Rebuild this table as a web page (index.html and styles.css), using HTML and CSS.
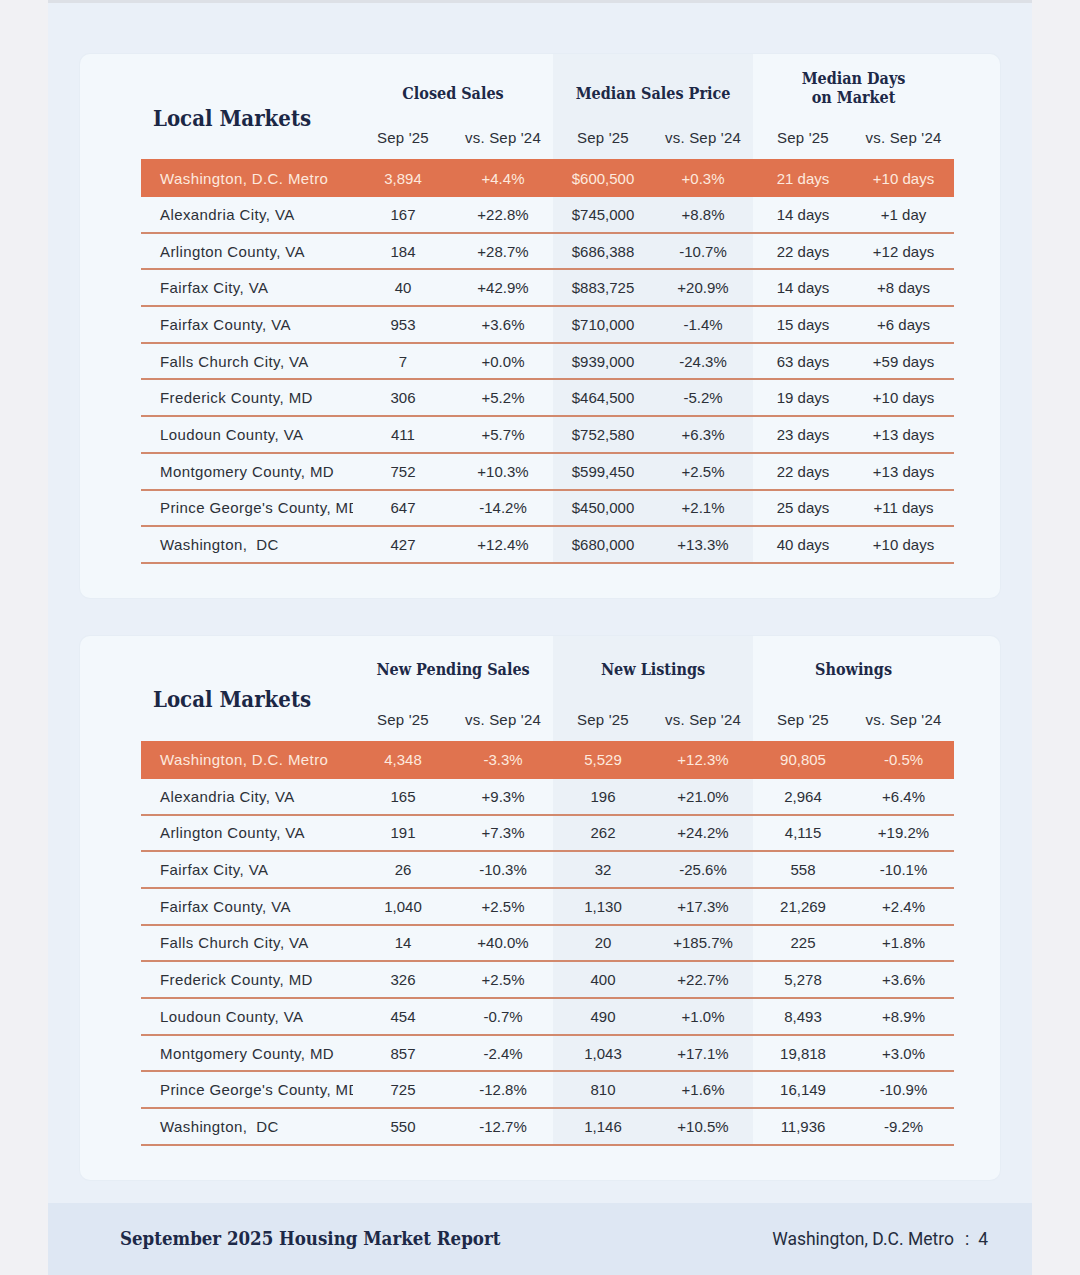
FILE: index.html
```html
<!DOCTYPE html>
<html lang="en">
<head>
<meta charset="utf-8">
<title>September 2025 Housing Market Report</title>
<link rel="stylesheet" href="styles.css">
</head>
<body>
<div class="page">
  <section class="card">
    <table class="mkt">
      <colgroup>
        <col class="c-name"><col class="c-num"><col class="c-num"><col class="c-num shade"><col class="c-num shade"><col class="c-num"><col class="c-last">
      </colgroup>
      <thead>
        <tr class="grp">
          <th class="title" rowspan="2">Local Markets</th>
          <th colspan="2" class="lower">Closed Sales</th>
          <th colspan="2" class="lower">Median Sales Price</th>
          <th colspan="2">Median Days<br>on Market</th>
        </tr>
        <tr class="sub">
          <th>Sep '25</th><th>vs. Sep '24</th><th>Sep '25</th><th>vs. Sep '24</th><th>Sep '25</th><th>vs. Sep '24</th>
        </tr>
      </thead>
      <tbody>
        <tr class="hl"><td class="name">Washington, D.C. Metro</td><td>3,894</td><td>+4.4%</td><td>$600,500</td><td>+0.3%</td><td>21 days</td><td>+10 days</td></tr>
        <tr><td class="name">Alexandria City, VA</td><td>167</td><td>+22.8%</td><td>$745,000</td><td>+8.8%</td><td>14 days</td><td>+1 day</td></tr>
        <tr><td class="name">Arlington County, VA</td><td>184</td><td>+28.7%</td><td>$686,388</td><td>-10.7%</td><td>22 days</td><td>+12 days</td></tr>
        <tr><td class="name">Fairfax City, VA</td><td>40</td><td>+42.9%</td><td>$883,725</td><td>+20.9%</td><td>14 days</td><td>+8 days</td></tr>
        <tr><td class="name">Fairfax County, VA</td><td>953</td><td>+3.6%</td><td>$710,000</td><td>-1.4%</td><td>15 days</td><td>+6 days</td></tr>
        <tr><td class="name">Falls Church City, VA</td><td>7</td><td>+0.0%</td><td>$939,000</td><td>-24.3%</td><td>63 days</td><td>+59 days</td></tr>
        <tr><td class="name">Frederick County, MD</td><td>306</td><td>+5.2%</td><td>$464,500</td><td>-5.2%</td><td>19 days</td><td>+10 days</td></tr>
        <tr><td class="name">Loudoun County, VA</td><td>411</td><td>+5.7%</td><td>$752,580</td><td>+6.3%</td><td>23 days</td><td>+13 days</td></tr>
        <tr><td class="name">Montgomery County, MD</td><td>752</td><td>+10.3%</td><td>$599,450</td><td>+2.5%</td><td>22 days</td><td>+13 days</td></tr>
        <tr><td class="name">Prince George's County, MD</td><td>647</td><td>-14.2%</td><td>$450,000</td><td>+2.1%</td><td>25 days</td><td>+11 days</td></tr>
        <tr><td class="name">Washington,&nbsp; DC</td><td>427</td><td>+12.4%</td><td>$680,000</td><td>+13.3%</td><td>40 days</td><td>+10 days</td></tr>
      </tbody>
    </table>
  </section>

  <section class="card">
    <table class="mkt">
      <colgroup>
        <col class="c-name"><col class="c-num"><col class="c-num"><col class="c-num shade"><col class="c-num shade"><col class="c-num"><col class="c-last">
      </colgroup>
      <thead>
        <tr class="grp">
          <th class="title" rowspan="2">Local Markets</th>
          <th colspan="2">New Pending Sales</th>
          <th colspan="2">New Listings</th>
          <th colspan="2">Showings</th>
        </tr>
        <tr class="sub">
          <th>Sep '25</th><th>vs. Sep '24</th><th>Sep '25</th><th>vs. Sep '24</th><th>Sep '25</th><th>vs. Sep '24</th>
        </tr>
      </thead>
      <tbody>
        <tr class="hl"><td class="name">Washington, D.C. Metro</td><td>4,348</td><td>-3.3%</td><td>5,529</td><td>+12.3%</td><td>90,805</td><td>-0.5%</td></tr>
        <tr><td class="name">Alexandria City, VA</td><td>165</td><td>+9.3%</td><td>196</td><td>+21.0%</td><td>2,964</td><td>+6.4%</td></tr>
        <tr><td class="name">Arlington County, VA</td><td>191</td><td>+7.3%</td><td>262</td><td>+24.2%</td><td>4,115</td><td>+19.2%</td></tr>
        <tr><td class="name">Fairfax City, VA</td><td>26</td><td>-10.3%</td><td>32</td><td>-25.6%</td><td>558</td><td>-10.1%</td></tr>
        <tr><td class="name">Fairfax County, VA</td><td>1,040</td><td>+2.5%</td><td>1,130</td><td>+17.3%</td><td>21,269</td><td>+2.4%</td></tr>
        <tr><td class="name">Falls Church City, VA</td><td>14</td><td>+40.0%</td><td>20</td><td>+185.7%</td><td>225</td><td>+1.8%</td></tr>
        <tr><td class="name">Frederick County, MD</td><td>326</td><td>+2.5%</td><td>400</td><td>+22.7%</td><td>5,278</td><td>+3.6%</td></tr>
        <tr><td class="name">Loudoun County, VA</td><td>454</td><td>-0.7%</td><td>490</td><td>+1.0%</td><td>8,493</td><td>+8.9%</td></tr>
        <tr><td class="name">Montgomery County, MD</td><td>857</td><td>-2.4%</td><td>1,043</td><td>+17.1%</td><td>19,818</td><td>+3.0%</td></tr>
        <tr><td class="name">Prince George's County, MD</td><td>725</td><td>-12.8%</td><td>810</td><td>+1.6%</td><td>16,149</td><td>-10.9%</td></tr>
        <tr><td class="name">Washington,&nbsp; DC</td><td>550</td><td>-12.7%</td><td>1,146</td><td>+10.5%</td><td>11,936</td><td>-9.2%</td></tr>
      </tbody>
    </table>
  </section>

  <footer class="foot">
    <div class="foot-title">September 2025 Housing Market Report</div>
    <div class="foot-page">Washington, D.C. Metro<span class="sep">:</span>4</div>
  </footer>
</div>
</body>
</html>
```

FILE: styles.css
```css
* { box-sizing: border-box; }

html, body {
  margin: 0;
  padding: 0;
  background: #f1f1f4;
}

body {
  font-family: "Liberation Sans", Arial, sans-serif;
  color: #2c3038;
}

.page {
  width: 984px;
  margin: 0 auto;
  background: #eaf0f8;
  border-top: 3px solid #dde0e6;
  padding-top: 51px;
  display: flex;
  flex-direction: column;
  gap: 38px;
}

.card {
  margin: 0 32px;
  background: #f3f8fc;
  border-radius: 10px;
  box-shadow: 0 0 0 1px #e6edf5;
  padding: 0 46px 34px 61px;
}

.mkt {
  width: 813px;
  table-layout: fixed;
  border-collapse: separate;
  border-spacing: 0;
}

.c-name { width: 212px; }
.c-num { width: 100px; }
.c-last { width: 101px; }
.shade { background: #ebf1f7; }

.mkt th {
  font-weight: normal;
  padding: 0;
  text-align: center;
  vertical-align: middle;
}

.grp { height: 64px; }
.sub { height: 41px; }

.grp th {
  font-family: "DejaVu Serif Condensed", "DejaVu Serif", serif;
  font-stretch: condensed;
  font-weight: bold;
  font-size: 16px;
  line-height: 19px;
  color: #1d2947;
  padding-top: 4px;
}

.grp th.lower { padding-top: 14px; }

.grp th.title {
  text-align: left;
  padding-left: 12px;
  padding-top: 22px;
  font-size: 22px;
  line-height: 26px;
  color: #1b2745;
}

.sub th {
  font-size: 15px;
  letter-spacing: 0.2px;
  color: #2c3038;
  padding-bottom: 2px;
}

.mkt tbody tr { height: 36.7px; }
.mkt tbody tr.hl { height: 38px; }

.mkt td {
  padding: 0;
  font-size: 15px;
  text-align: center;
  vertical-align: middle;
  white-space: nowrap;
  border-bottom: 2px solid #d2896d;
}

.mkt td.name {
  text-align: left;
  padding-left: 19px;
  letter-spacing: 0.4px;
  overflow: hidden;
}

.mkt tr.hl td {
  background: #e0734f;
  color: #fde9de;
  border-bottom: 0;
}

.foot {
  margin-top: -15px;
  height: 80px;
  background: #dee7f3;
  display: flex;
  align-items: center;
  justify-content: space-between;
  padding: 0 44px 8px 72px;
}

.foot-title {
  font-family: "DejaVu Serif Condensed", "DejaVu Serif", serif;
  font-stretch: condensed;
  font-weight: bold;
  font-size: 18.5px;
  color: #1d2947;
}

.foot-page {
  font-family: Roboto, "Liberation Sans", sans-serif;
  font-size: 17.5px;
  color: #252d3e;
}

.foot-page .sep { margin: 0 9px 0 11px; }
```
